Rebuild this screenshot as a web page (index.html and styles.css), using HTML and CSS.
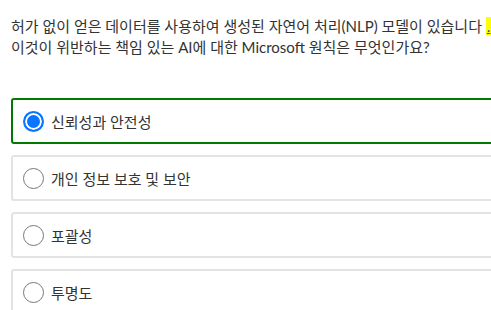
FILE: index.html
```html
<!DOCTYPE html>
<html lang="ko">
<head>
    <meta charset="UTF-8">
    <meta name="viewport" content="width=device-width, initial-scale=1.0">
    <title>Quiz</title>
    <link rel="stylesheet" href="styles.css">
</head>
<body>
    <div class="quiz">
        <p class="question">
            허가 없이 얻은 데이터를 사용하여 생성된 자연어 처리(NLP) 모델이 있습니다 <span class="mark"><a href="#">.</a></span><br>
            이것이 위반하는 책임 있는 AI에 대한 Microsoft 원칙은 무엇인가요?
        </p>

        <ul class="options">
            <li class="option selected">
                <span class="radio"></span>
                <span class="label">신뢰성과 안전성</span>
            </li>
            <li class="option">
                <span class="radio"></span>
                <span class="label">개인 정보 보호 및 보안</span>
            </li>
            <li class="option">
                <span class="radio"></span>
                <span class="label">포괄성</span>
            </li>
            <li class="option">
                <span class="radio"></span>
                <span class="label">투명도</span>
            </li>
        </ul>
    </div>
</body>
</html>
```

FILE: styles.css
```css
body {
    margin: 0;
    overflow: hidden;
    background: #fff;
    font-family: Lato, "Noto Sans CJK KR", sans-serif;
    color: #333;
}

.quiz {
    padding: 16px 0 0 11px;
}

.question {
    margin: 0;
    font-size: 15px;
    line-height: 21px;
    color: #333;
    white-space: nowrap;
}

.mark {
    background: #ffff00;
    padding: 0 1px;
}

.mark a {
    color: #1a57c9;
}

.options {
    list-style: none;
    margin: 40px 0 0;
    padding: 0;
    width: 500px;
}

.option {
    display: flex;
    align-items: center;
    gap: 7px;
    height: 42px;
    padding: 0 10px;
    margin-bottom: 11px;
    border: 2px solid #e3e3e3;
    border-radius: 3px;
}

.option.selected {
    border-color: #007a00;
}

.radio {
    width: 21px;
    height: 21px;
    border: 1px solid #777;
    border-radius: 50%;
    box-sizing: border-box;
    flex-shrink: 0;
}

.selected .radio {
    border: 2px solid #0a75ff;
    background: #0a75ff;
    box-shadow: inset 0 0 0 2px #fff;
}

.label {
    font-size: 15px;
    color: #333;
}
```
